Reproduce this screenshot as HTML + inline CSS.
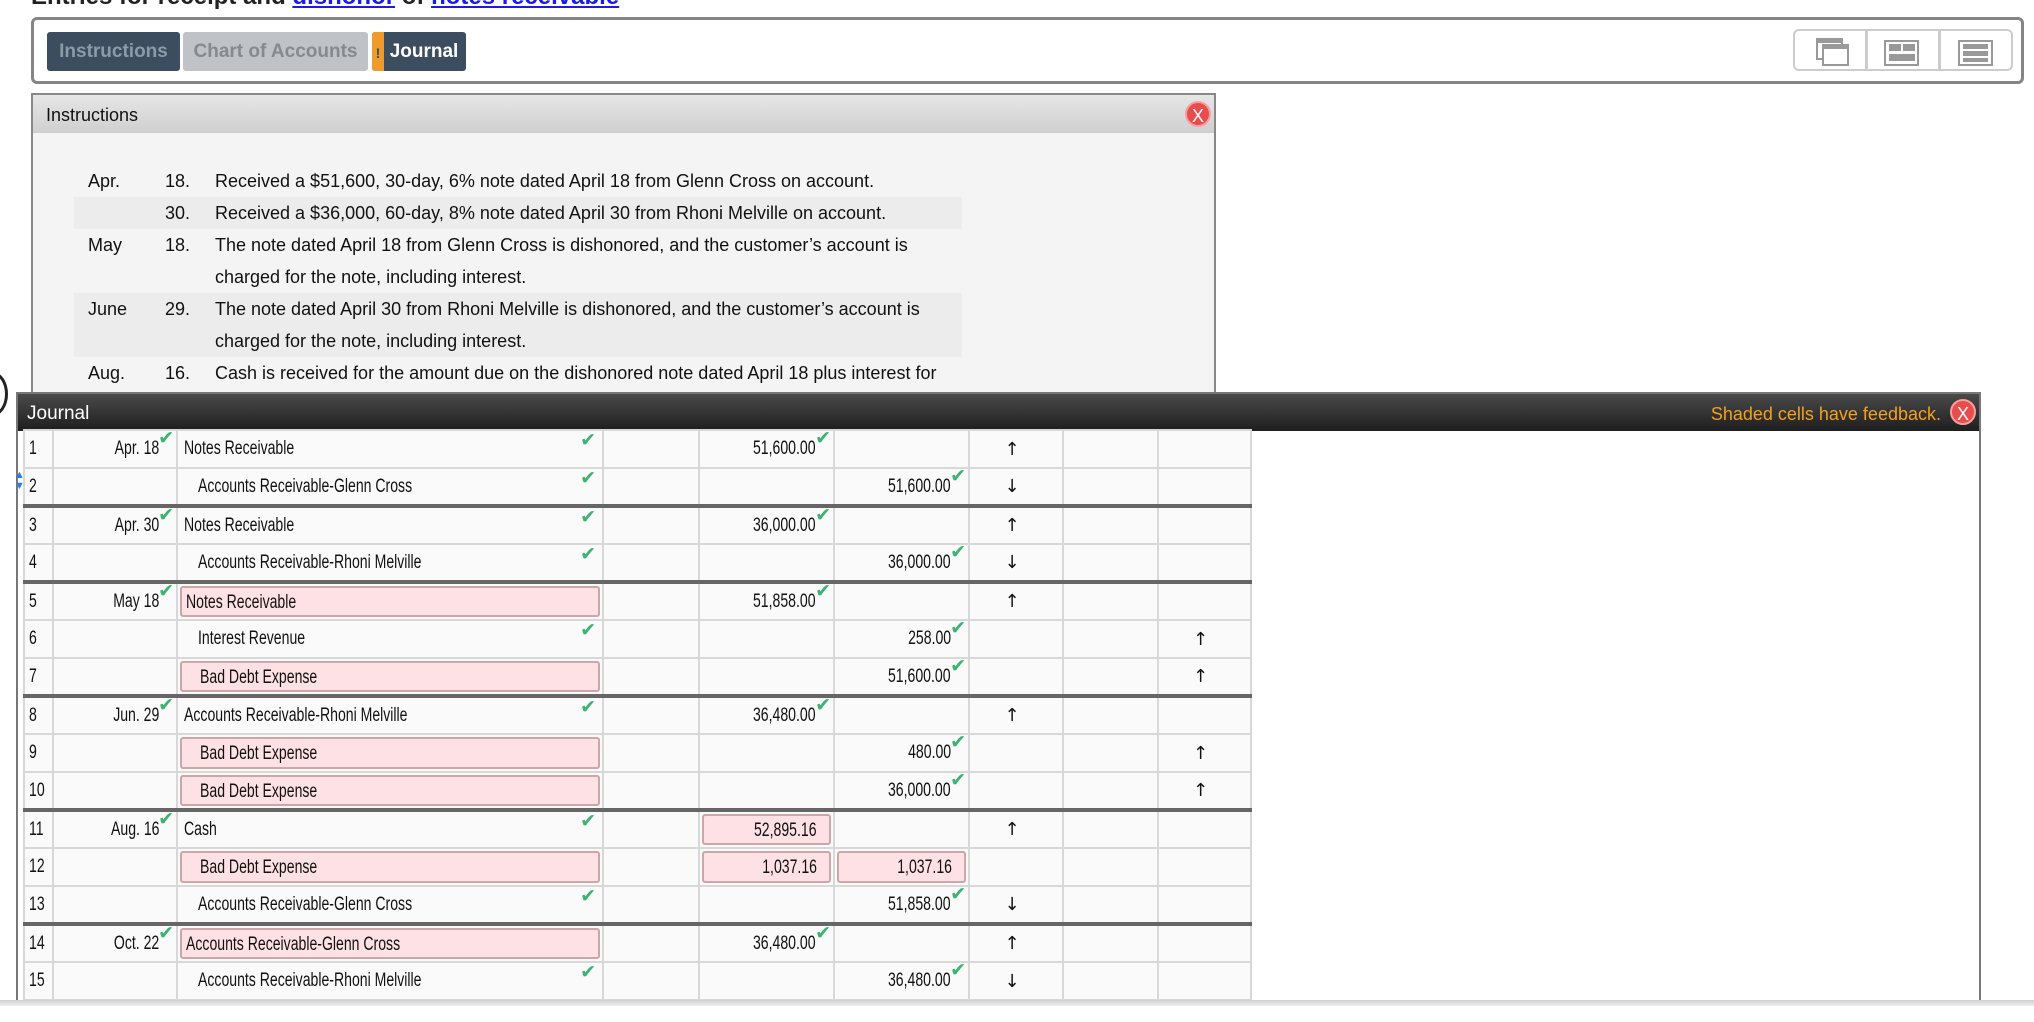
<!DOCTYPE html>
<html><head><meta charset="utf-8"><style>
*{box-sizing:border-box;margin:0;padding:0}
body{width:2034px;height:1022px;overflow:hidden;background:#fff;font-family:"Liberation Sans",Arial,sans-serif;position:relative}
.abs{position:absolute}
.title{left:31px;top:-17px;font-size:24px;font-weight:bold;color:#222;white-space:nowrap}
.title a{color:#1a1aee;text-decoration:underline}
.toolbar{left:31px;top:17px;width:1993px;height:67px;border:3px solid #858585;border-radius:6px;background:#fff}
.tab{position:absolute;top:12px;height:39px;border-radius:3px;font-size:19px;font-weight:bold;line-height:39px;text-align:center}
.icons{left:1793px;top:29px;width:220px;height:42px;border:2px solid #ccc;border-radius:6px;background:#fff}
.icons div.sep{position:absolute;top:0;width:3px;height:38px;background:#ccc}
.ins{left:31px;top:93px;width:1185px;height:300px;border:2px solid #888;border-bottom:none;background:#f3f4f3}
.inshead{position:absolute;left:0;top:0;width:100%;height:38px;background:linear-gradient(#e6e6e6,#d0d0d0);border-bottom:1px solid #ccc;font-size:18px;line-height:40px;padding-left:13px;color:#111}
.closex{width:26px;height:26px;border-radius:50%;background:#e84c4c;color:#fff;font-size:18px;line-height:26px;text-align:center;border:2px solid #f5a0a0}
.ir{position:absolute;left:41px;width:888px;height:32px;font-size:18px;color:#111;line-height:32px}
.ir span{position:absolute}
.shade{background:#ececec}
.jp{left:16px;top:392px;width:1965px;height:620px;border:2px solid #777;border-bottom:none;background:#fff}
.jhead{position:absolute;left:0;top:0;width:100%;height:37px;background:linear-gradient(#4a4a4a,#1e1e1e);color:#fff;font-size:19px;line-height:40px;padding-left:9px}
table{position:absolute;left:23px;top:429px;border-collapse:collapse;table-layout:fixed;font-family:"Liberation Sans",sans-serif;font-size:19px;color:#111}
td{height:38px;border:2px solid #d8d8d8;background:#fafafa;position:relative;padding:0;white-space:nowrap}
tr.g td{border-top:4px solid #666}
.t{display:inline-block;transform:scaleX(.74);transform-origin:left center}
.d .t,.m .t{transform-origin:right center}
td.n{padding-left:4px}
td.d{text-align:right;padding-right:17px}
td.a{padding-left:6px}
td.a.i{padding-left:20px}
td.m{text-align:right;padding-right:17px}
td.ar{text-align:center;font-size:18px;font-family:"DejaVu Sans",sans-serif;padding-right:8px}
.pk{position:absolute;left:2px;right:2px;top:2px;bottom:2px;background:#fde1e4;border:2px solid #cda6aa;border-radius:3px;padding-left:4px;line-height:30px}
.a.i .pk{padding-left:18px}
.m .pk{text-align:right;padding-right:12px}
.ck{position:absolute;top:-4px;color:#3cb371;font-size:19px;font-family:"DejaVu Sans",sans-serif;font-weight:bold}
.d .ck{right:2px}
.a .ck{right:6px;top:-2px}
.m .ck{right:2px}
</style></head><body>
<div class="abs title">Entries for receipt and <a>dishonor</a> of <a>notes receivable</a></div>
<div class="abs toolbar">
 <div class="tab" style="left:13px;width:133px;background:#3c4d5f;color:#8e9aa6">Instructions</div>
 <div class="tab" style="left:149px;width:185px;background:#bfc3c7;color:#858a8f">Chart of Accounts</div>
 <div class="tab" style="left:338px;width:94px;background:#3c4d5f;color:#fff;overflow:hidden"><span style="position:absolute;left:0;top:0;width:12px;height:39px;background:#f09a2a;color:#3c4d5f;font-size:14px;line-height:42px">!</span><span style="padding-left:10px">Journal</span></div>
</div>
<div class="abs icons">
 <div class="sep" style="left:70px"></div><div class="sep" style="left:143px"></div>
 <svg class="abs" style="left:0;top:0" width="216" height="38">
  <rect x="22" y="8" width="25" height="20" fill="#fff" stroke="#999" stroke-width="2"/><rect x="22" y="8" width="25" height="4" fill="#999"/>
  <rect x="28" y="14" width="25" height="20" fill="#fff" stroke="#999" stroke-width="2"/><rect x="28" y="14" width="25" height="4" fill="#999"/>
  <rect x="90" y="10" width="33" height="24" fill="#fff" stroke="#999" stroke-width="2"/><rect x="94" y="13" width="12" height="7" fill="#999"/><rect x="108" y="13" width="12" height="7" fill="#999"/><rect x="94" y="23" width="26" height="7" fill="#999"/>
  <rect x="164" y="10" width="33" height="24" fill="#fff" stroke="#999" stroke-width="2"/><rect x="168" y="13" width="25" height="5" fill="#999"/><rect x="168" y="20" width="25" height="5" fill="#999"/><rect x="168" y="27" width="25" height="4" fill="#999"/>
 </svg>
</div>
<div class="abs" style="left:-22px;top:372px;width:30px;height:44px;border:3px solid #222;border-radius:50%"></div>
<div class="abs ins">
 <div class="inshead">Instructions</div>
 <div class="abs closex" style="left:1152px;top:6px">X</div>
 <div class="ir" style="top:70px"><span style="left:14px">Apr.</span><span style="left:91px">18.</span><span style="left:141px">Received a $51,600, 30-day, 6% note dated April 18 from Glenn Cross on account.</span></div>
 <div class="ir shade" style="top:102px"><span style="left:91px">30.</span><span style="left:141px">Received a $36,000, 60-day, 8% note dated April 30 from Rhoni Melville on account.</span></div>
 <div class="ir" style="top:134px"><span style="left:14px">May</span><span style="left:91px">18.</span><span style="left:141px">The note dated April 18 from Glenn Cross is dishonored, and the customer’s account is</span></div>
 <div class="ir" style="top:166px"><span style="left:141px">charged for the note, including interest.</span></div>
 <div class="ir shade" style="top:198px;height:64px"><span style="left:14px">June</span><span style="left:91px">29.</span><span style="left:141px">The note dated April 30 from Rhoni Melville is dishonored, and the customer’s account is</span><span style="left:141px;top:32px">charged for the note, including interest.</span></div>
 <div class="ir" style="top:262px"><span style="left:14px">Aug.</span><span style="left:91px">16.</span><span style="left:141px">Cash is received for the amount due on the dishonored note dated April 18 plus interest for</span></div>
</div>
<div class="abs jp">
 <div class="jhead">Journal<span style="position:absolute;right:38px;top:0;color:#f5a020;font-size:18px">Shaded cells have feedback.</span></div>
 <div class="abs closex" style="left:1932px;top:5px">X</div>
</div>
<div class="abs" style="left:14px;top:470px;color:#2a7de1;font-size:11px;line-height:11px">▲<br>▼</div>
<table>
<colgroup><col style="width:29px"><col style="width:124px"><col style="width:426px"><col style="width:96px"><col style="width:135px"><col style="width:135px"><col style="width:94px"><col style="width:95px"><col style="width:93px"></colgroup>
<tr><td class="n"><span class="t">1</span></td><td class="d"><span class="t">Apr. 18</span><span class="ck">✔</span></td><td class="a"><span class="t">Notes Receivable</span><span class="ck">✔</span></td><td></td><td class="m"><span class="t">51,600.00</span><span class="ck">✔</span></td><td class="m"></td><td class="ar">↑</td><td></td><td></td></tr>
<tr><td class="n"><span class="t">2</span></td><td class="d"></td><td class="a i"><span class="t">Accounts Receivable-Glenn Cross</span><span class="ck">✔</span></td><td></td><td class="m"></td><td class="m"><span class="t">51,600.00</span><span class="ck">✔</span></td><td class="ar">↓</td><td></td><td></td></tr>
<tr class="g"><td class="n"><span class="t">3</span></td><td class="d"><span class="t">Apr. 30</span><span class="ck">✔</span></td><td class="a"><span class="t">Notes Receivable</span><span class="ck">✔</span></td><td></td><td class="m"><span class="t">36,000.00</span><span class="ck">✔</span></td><td class="m"></td><td class="ar">↑</td><td></td><td></td></tr>
<tr><td class="n"><span class="t">4</span></td><td class="d"></td><td class="a i"><span class="t">Accounts Receivable-Rhoni Melville</span><span class="ck">✔</span></td><td></td><td class="m"></td><td class="m"><span class="t">36,000.00</span><span class="ck">✔</span></td><td class="ar">↓</td><td></td><td></td></tr>
<tr class="g"><td class="n"><span class="t">5</span></td><td class="d"><span class="t">May 18</span><span class="ck">✔</span></td><td class="a"><div class="pk"><span class="t">Notes Receivable</span></div></td><td></td><td class="m"><span class="t">51,858.00</span><span class="ck">✔</span></td><td class="m"></td><td class="ar">↑</td><td></td><td></td></tr>
<tr><td class="n"><span class="t">6</span></td><td class="d"></td><td class="a i"><span class="t">Interest Revenue</span><span class="ck">✔</span></td><td></td><td class="m"></td><td class="m"><span class="t">258.00</span><span class="ck">✔</span></td><td></td><td></td><td class="ar">↑</td></tr>
<tr><td class="n"><span class="t">7</span></td><td class="d"></td><td class="a i"><div class="pk"><span class="t">Bad Debt Expense</span></div></td><td></td><td class="m"></td><td class="m"><span class="t">51,600.00</span><span class="ck">✔</span></td><td></td><td></td><td class="ar">↑</td></tr>
<tr class="g"><td class="n"><span class="t">8</span></td><td class="d"><span class="t">Jun. 29</span><span class="ck">✔</span></td><td class="a"><span class="t">Accounts Receivable-Rhoni Melville</span><span class="ck">✔</span></td><td></td><td class="m"><span class="t">36,480.00</span><span class="ck">✔</span></td><td class="m"></td><td class="ar">↑</td><td></td><td></td></tr>
<tr><td class="n"><span class="t">9</span></td><td class="d"></td><td class="a i"><div class="pk"><span class="t">Bad Debt Expense</span></div></td><td></td><td class="m"></td><td class="m"><span class="t">480.00</span><span class="ck">✔</span></td><td></td><td></td><td class="ar">↑</td></tr>
<tr><td class="n"><span class="t">10</span></td><td class="d"></td><td class="a i"><div class="pk"><span class="t">Bad Debt Expense</span></div></td><td></td><td class="m"></td><td class="m"><span class="t">36,000.00</span><span class="ck">✔</span></td><td></td><td></td><td class="ar">↑</td></tr>
<tr class="g"><td class="n"><span class="t">11</span></td><td class="d"><span class="t">Aug. 16</span><span class="ck">✔</span></td><td class="a"><span class="t">Cash</span><span class="ck">✔</span></td><td></td><td class="m"><div class="pk"><span class="t">52,895.16</span></div></td><td class="m"></td><td class="ar">↑</td><td></td><td></td></tr>
<tr><td class="n"><span class="t">12</span></td><td class="d"></td><td class="a i"><div class="pk"><span class="t">Bad Debt Expense</span></div></td><td></td><td class="m"><div class="pk"><span class="t">1,037.16</span></div></td><td class="m"><div class="pk"><span class="t">1,037.16</span></div></td><td></td><td></td><td></td></tr>
<tr><td class="n"><span class="t">13</span></td><td class="d"></td><td class="a i"><span class="t">Accounts Receivable-Glenn Cross</span><span class="ck">✔</span></td><td></td><td class="m"></td><td class="m"><span class="t">51,858.00</span><span class="ck">✔</span></td><td class="ar">↓</td><td></td><td></td></tr>
<tr class="g"><td class="n"><span class="t">14</span></td><td class="d"><span class="t">Oct. 22</span><span class="ck">✔</span></td><td class="a"><div class="pk"><span class="t">Accounts Receivable-Glenn Cross</span></div></td><td></td><td class="m"><span class="t">36,480.00</span><span class="ck">✔</span></td><td class="m"></td><td class="ar">↑</td><td></td><td></td></tr>
<tr><td class="n"><span class="t">15</span></td><td class="d"></td><td class="a i"><span class="t">Accounts Receivable-Rhoni Melville</span><span class="ck">✔</span></td><td></td><td class="m"></td><td class="m"><span class="t">36,480.00</span><span class="ck">✔</span></td><td class="ar">↓</td><td></td><td></td></tr>
</table>
<div class="abs" style="left:0;top:1000px;width:2034px;height:6px;background:linear-gradient(#d0d0d0,#eee)"></div>
<div class="abs" style="left:0;top:1006px;width:2034px;height:16px;background:#fff"></div>
</body></html>
